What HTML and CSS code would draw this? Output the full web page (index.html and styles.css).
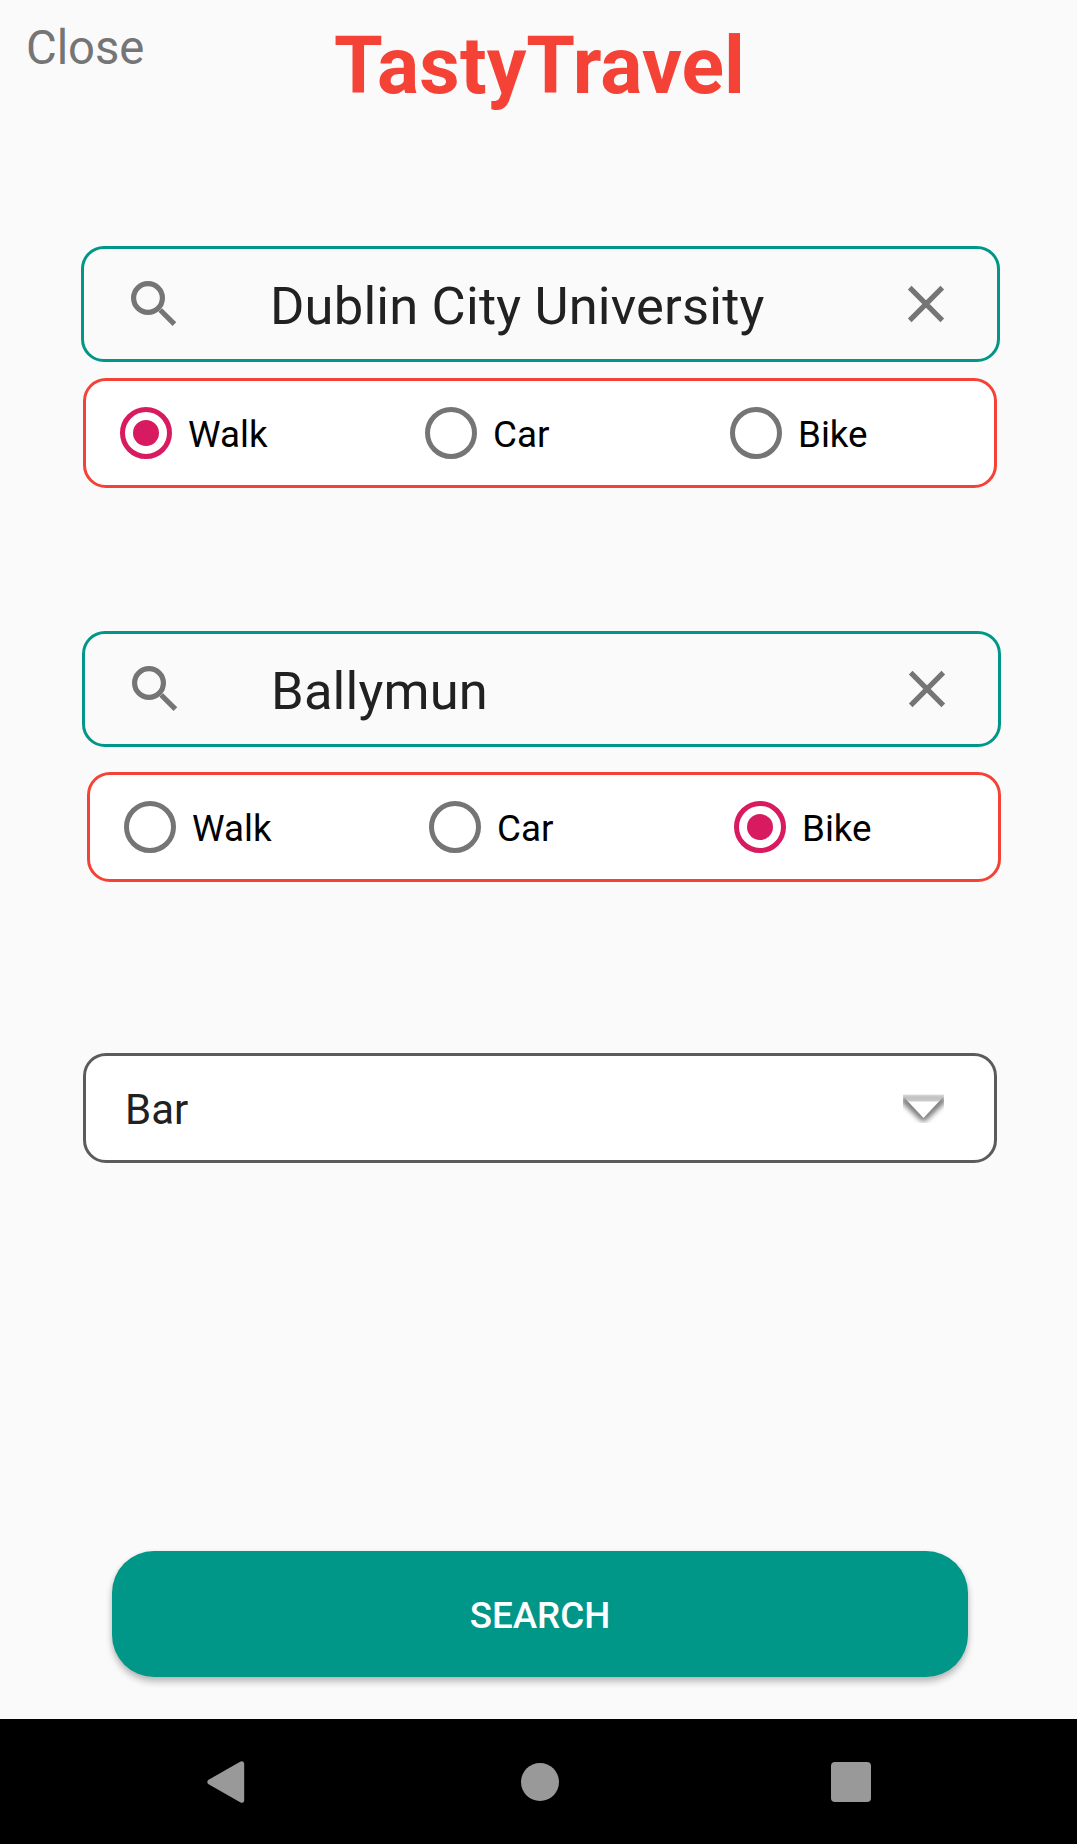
FILE: index.html
```html
<!DOCTYPE html>
<html lang="en">
<head>
<meta charset="utf-8">
<title>TastyTravel</title>
<link rel="stylesheet" href="styles.css">
</head>
<body>
<div class="app">
  <header class="header">
    <a class="close">Close</a>
    <h1 class="title">TastyTravel</h1>
  </header>

  <main class="form">
    <div class="field field-from">
      <svg class="icon-search" width="46" height="46" viewBox="0 0 46 46"><circle cx="18" cy="17" r="14.4"/><path d="M30.2 29 44.4 43.2"/></svg>
      <span class="query">Dublin City University</span>
      <svg class="icon-clear" width="38" height="38" viewBox="0 0 38 38"><path d="M2.7 2.7 35.3 35.3M35.3 2.7 2.7 35.3"/></svg>
    </div>
    <div class="modes modes-from">
      <label class="mode"><span class="radio checked"></span><span class="mode-name">Walk</span></label>
      <label class="mode"><span class="radio"></span><span class="mode-name">Car</span></label>
      <label class="mode"><span class="radio"></span><span class="mode-name">Bike</span></label>
    </div>

    <div class="field field-to">
      <svg class="icon-search" width="46" height="46" viewBox="0 0 46 46"><circle cx="18" cy="17" r="14.4"/><path d="M30.2 29 44.4 43.2"/></svg>
      <span class="query">Ballymun</span>
      <svg class="icon-clear" width="38" height="38" viewBox="0 0 38 38"><path d="M2.7 2.7 35.3 35.3M35.3 2.7 2.7 35.3"/></svg>
    </div>
    <div class="modes modes-to">
      <label class="mode"><span class="radio"></span><span class="mode-name">Walk</span></label>
      <label class="mode"><span class="radio"></span><span class="mode-name">Car</span></label>
      <label class="mode"><span class="radio checked"></span><span class="mode-name">Bike</span></label>
    </div>

    <div class="select">
      <span class="select-value">Bar</span>
      <svg class="select-arrow" width="41" height="29" viewBox="0 0 41 29">
        <defs>
          <filter id="soft" x="-30%" y="-30%" width="160%" height="160%"><feGaussianBlur stdDeviation="2.6"/></filter>
          <filter id="edge"><feGaussianBlur stdDeviation=".5"/></filter>
          <linearGradient id="lip" x1="0" y1="0" x2="0" y2="1"><stop offset="0" stop-color="#d6d6d6"/><stop offset=".35" stop-color="#c2c2c2"/><stop offset="1" stop-color="#cdcdcd"/></linearGradient>
        </defs>
        <path d="M-2 3H43V8L24 26Q20.5 29 17 26L-2 8Z" fill="#808080" filter="url(#soft)"/>
        <path d="M0 0H41V1H0Z" fill="#f0f0f0"/>
        <path d="M0 1H41L36 8H5Z" fill="url(#lip)"/>
        <path d="M5 7.5H36L20.5 24Z" fill="#fff" filter="url(#edge)"/>
      </svg>
    </div>

    <button class="search" type="button">SEARCH</button>
  </main>

  <nav class="navbar">
    <svg class="nav-back" width="38" height="42" viewBox="0 0 38 42"><path d="M1.2 19 33.6.6Q37 -.6 37.2 2.8V39.2Q37 42.6 33.6 41.4L1.2 23Q-.6 21 1.2 19Z"/></svg>
    <svg class="nav-home" width="38" height="42" viewBox="0 0 38 42"><circle cx="19" cy="21" r="19"/></svg>
    <svg class="nav-recent" width="40" height="40" viewBox="0 0 40 40"><rect width="40" height="40" rx="4"/></svg>
  </nav>
</div>
</body>
</html>
```
FILE: styles.css
```css
* { box-sizing: border-box; }

body {
  margin: 0;
  background: #fafafa;
  font-family: Roboto, "Liberation Sans", sans-serif;
}

.app {
  display: flex;
  flex-direction: column;
  width: 1077px;
  height: 1844px;
}

.header {
  display: grid;
  grid-template-columns: 309px 461px 307px;
  align-items: start;
  height: 246px;
}

.close {
  padding: 18px 0 0 26px;
  font-size: 47.25px;
  line-height: 60px;
  letter-spacing: -.1px;
  color: #757575;
}

.title {
  margin: 20px 0 0;
  font-size: 78.75px;
  font-weight: 700;
  line-height: 92px;
  text-align: center;
  letter-spacing: .1px;
  color: #f44336;
}

.form {
  display: flex;
  flex: 1;
  flex-direction: column;
}

.field,
.modes,
.select {
  display: flex;
  align-items: center;
  flex: none;
  border: 3px solid;
  border-radius: 23px;
}

.field {
  width: 919px;
  height: 116px;
  padding: 0 52px 0 46px;
  border-color: #009688;
}

.field-from { margin-left: 81px; }
.field-to { margin: 143px 0 0 82px; }

.query {
  flex: 1;
  padding: 4px 0 0 94px;
  font-size: 52.5px;
  line-height: 62px;
  letter-spacing: .17px;
  color: #212121;
}

.icon-search,
.icon-clear {
  flex: none;
  overflow: visible;
  fill: none;
  stroke: #757575;
  stroke-width: 5.2;
}

.modes,
.select {
  width: 914px;
  height: 110px;
  background: #fff;
}

.modes {
  padding-left: 34px;
  border-color: #f44336;
}

.modes-from { margin: 16px 0 0 83px; }
.modes-to { margin: 25px 0 0 87px; }

.mode {
  display: flex;
  align-items: center;
  gap: 16px;
  width: 305px;
  font-size: 36.75px;
  line-height: 44px;
  color: #000;
}

.mode:last-child { width: auto; }
.mode-name { padding-top: 4px; }

.radio {
  display: grid;
  place-items: center;
  width: 52px;
  height: 52px;
  border: 5px solid #757575;
  border-radius: 50%;
}

.checked { border-color: #d81b60; }

.checked::after {
  content: "";
  width: 26px;
  height: 26px;
  border-radius: 50%;
  background: #d81b60;
}

.select {
  justify-content: space-between;
  margin: 171px 0 0 83px;
  padding: 0 50px 0 39px;
  border-color: #5b5b5b;
}

.select-value {
  padding-top: 4px;
  font-size: 42px;
  line-height: 50px;
  color: #212121;
}

.search {
  width: 856px;
  height: 126px;
  margin: 388px 0 0 112px;
  padding: 2px 0 0;
  border: 0;
  border-radius: 42px;
  background: #009688;
  box-shadow: 0 5px 7px rgba(0, 0, 0, .24), 0 1px 5px rgba(0, 0, 0, .08);
  font-family: inherit;
  font-size: 36.75px;
  font-weight: 500;
  color: #fff;
}

.navbar {
  display: flex;
  align-items: center;
  height: 125px;
  background: #000;
  fill: #999;
}

.nav-back { margin-left: 207px; }
.nav-home { margin-left: 276px; }
.nav-recent { margin-left: 272px; }
```
